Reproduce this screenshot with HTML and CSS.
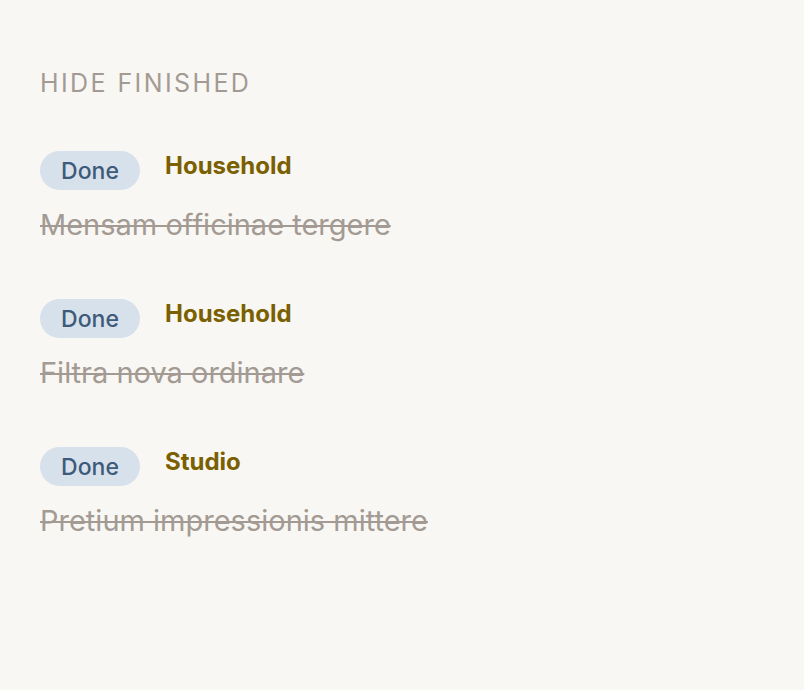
FILE: index.html
```html
<!DOCTYPE html>
<html>
<head>
<meta charset="utf-8">
<link rel="stylesheet" href="styles.css">
</head>
<body>
<div class="page">
  <h2 class="heading">HIDE FINISHED</h2>
  <ul class="list">
    <li class="item">
      <div class="meta"><span class="badge">Done</span><span class="cat">Household</span></div>
      <div class="title">Mensam officinae tergere</div>
    </li>
    <li class="item">
      <div class="meta"><span class="badge">Done</span><span class="cat">Household</span></div>
      <div class="title">Filtra nova ordinare</div>
    </li>
    <li class="item">
      <div class="meta"><span class="badge">Done</span><span class="cat">Studio</span></div>
      <div class="title">Pretium impressionis mittere</div>
    </li>
  </ul>
</div>
</body>
</html>
```
FILE: styles.css
```css
html, body { margin: 0; padding: 0; }
body { background: #f9f7f3; font-family: Inter, "Noto Sans", sans-serif; }
.page { padding: 68px 40px 40px; }
.heading { margin: 0; font-size: 25px; font-weight: 400; letter-spacing: 2.4px; color: #a39b93; line-height: 30px; }
.list { list-style: none; margin: 53px 0 0; padding: 0; display: flex; flex-direction: column; gap: 56px; }
.item { display: flex; flex-direction: column; gap: 17px; }
.meta { display: flex; align-items: flex-start; gap: 25px; }
.badge { display: inline-flex; align-items: center; justify-content: center; width: 100px; height: 39px; border-radius: 20px; background: #d6e1ec; color: #3e5a78; font-size: 23px; font-weight: 500; }
.cat { color: #7a6000; font-weight: 700; font-size: 24px; line-height: 30px; }
.title { color: #a39b93; font-size: 29px; line-height: 36px; text-decoration: line-through; text-decoration-thickness: 2px; }
```
